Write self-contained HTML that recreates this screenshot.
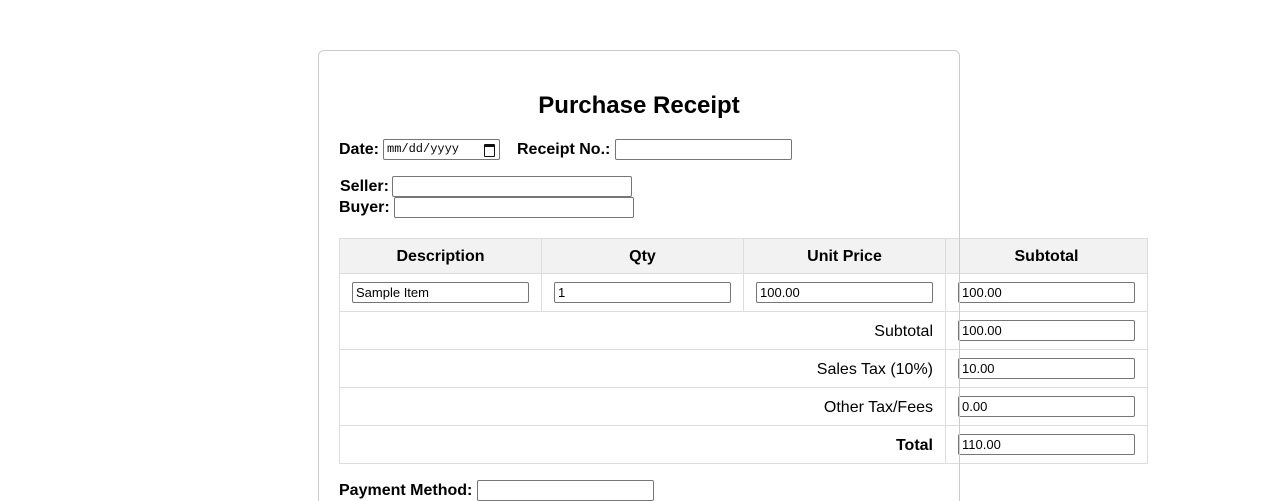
<!DOCTYPE html>
<html><head><style>
html,body{margin:0;background:#fff;font-family:"Liberation Sans",Arial,sans-serif;width:1278px;height:501px;overflow:hidden;position:relative}
.card{position:absolute;left:318px;top:50px;width:642px;height:451px;border:1px solid #ccc;border-bottom:none;border-radius:6px 6px 0 0;box-sizing:border-box;z-index:5;pointer-events:none}
.a{position:absolute}
.lbl{position:absolute;font-weight:bold;font-size:16px;line-height:18px}
.in{position:absolute;box-sizing:border-box;border:1px solid #767676;border-radius:2px;height:21px;font-size:13px;line-height:19px;padding-left:3px;background:#fff;color:#000}
.cell{position:absolute;box-sizing:border-box;border:1px solid #ddd;margin:-1px 0 0 -1px}
.h{background:#f2f2f2;font-weight:bold;font-size:16px;text-align:center;line-height:36px}
.r{font-size:16px;text-align:right;padding-right:12px;line-height:39px}
</style></head><body>
<div class="card"></div>
<div class="a" style="left:318px;width:642px;top:92px;text-align:center;font-size:24px;font-weight:bold">Purchase Receipt</div>
<div class="lbl" style="left:339px;top:141px">Date:</div>
<div class="in" style="left:383px;top:139px;width:117px;font-family:'Liberation Mono',monospace;font-size:12px;">mm/dd/yyyy<span style="position:absolute;right:4px;top:4px;width:9px;height:9px;border:1.5px solid #111;border-top-width:3px;border-radius:1px"></span></div>
<div class="lbl" style="left:517px;top:141px">Receipt No.:</div>
<div class="in" style="left:615px;top:139px;width:177px"></div>
<div class="lbl" style="left:340px;top:178px">Seller:</div>
<div class="in" style="left:392px;top:176px;width:240px"></div>
<div class="lbl" style="left:339px;top:199px">Buyer:</div>
<div class="in" style="left:394px;top:197px;width:240px"></div>

<div class="cell h" style="left:340px;top:239px;width:203px;height:36px">Description</div>
<div class="cell h" style="left:542px;top:239px;width:203px;height:36px">Qty</div>
<div class="cell h" style="left:744px;top:239px;width:203px;height:36px">Unit Price</div>
<div class="cell h" style="left:946px;top:239px;width:203px;height:36px">Subtotal</div>

<div class="cell" style="left:340px;top:274px;width:203px;height:39px"></div>
<div class="cell" style="left:542px;top:274px;width:203px;height:39px"></div>
<div class="cell" style="left:744px;top:274px;width:203px;height:39px"></div>
<div class="cell" style="left:946px;top:274px;width:203px;height:39px"></div>
<div class="in" style="left:352px;top:282px;width:177px">Sample Item</div>
<div class="in" style="left:554px;top:282px;width:177px">1</div>
<div class="in" style="left:756px;top:282px;width:177px">100.00</div>
<div class="in" style="left:958px;top:282px;width:177px">100.00</div>

<div class="cell r" style="left:340px;top:312px;width:607px;height:39px">Subtotal</div>
<div class="cell" style="left:946px;top:312px;width:203px;height:39px"></div>
<div class="in" style="left:958px;top:320px;width:177px">100.00</div>
<div class="cell r" style="left:340px;top:350px;width:607px;height:39px">Sales Tax (10%)</div>
<div class="cell" style="left:946px;top:350px;width:203px;height:39px"></div>
<div class="in" style="left:958px;top:358px;width:177px">10.00</div>
<div class="cell r" style="left:340px;top:388px;width:607px;height:39px">Other Tax/Fees</div>
<div class="cell" style="left:946px;top:388px;width:203px;height:39px"></div>
<div class="in" style="left:958px;top:396px;width:177px">0.00</div>
<div class="cell r" style="left:340px;top:426px;width:607px;height:39px;font-weight:bold">Total</div>
<div class="cell" style="left:946px;top:426px;width:203px;height:39px"></div>
<div class="in" style="left:958px;top:434px;width:177px">110.00</div>

<div class="lbl" style="left:339px;top:482px">Payment Method:</div>
<div class="in" style="left:477px;top:480px;width:177px;height:21px"></div>
</body></html>
